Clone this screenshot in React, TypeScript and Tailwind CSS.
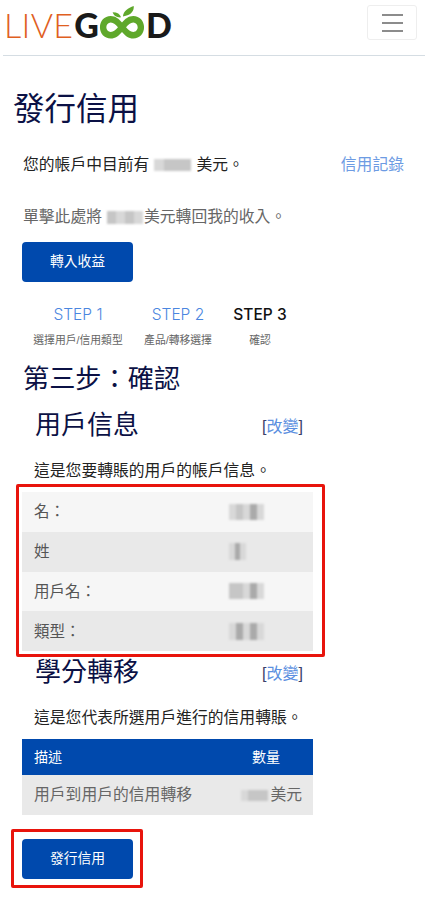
import { ReactNode } from 'react'

const font = { cjk: 'font-["Liberation_Sans","Noto_Sans_CJK_TC",sans-serif]' }

// pixelated-out amounts in the screenshot, one shade per block
function Redacted({ shades, className }: { shades: string[]; className: string }) {
  return (
    <span className={`flex blur-[1px] ${className}`}>
      {shades.map((shade, i) => (
        <span key={i} className={`flex-1 ${shade}`} />
      ))}
    </span>
  )
}

const light = 'bg-[#d8d8d8]'
const mid = 'bg-[#c6c6c6]'
const dark = 'bg-[#aaaaaa]'
const blank = 'bg-transparent'

function Logo() {
  return (
    <div className="flex items-start h-[55px] pl-[1px] pt-[4px] select-none">
      <span className="font-['Lato',sans-serif] font-light text-[#e0601f] text-[34px] leading-[42px] tracking-[0.3px]">LIVE</span>
      <span className="font-['Lato',sans-serif] font-black text-[#1a1a1a] text-[34px] leading-[42px] ml-[1px]">G</span>
      <svg width="46" height="36" viewBox="0 0 49 36" className="mt-[1px]">
        <path fillRule="evenodd" fill="#5fa82b" d="M12.500 10.500C5.500 10.500 1 16 1 22.500S5.500 34.500 12.500 34.500c5 0 8.700-3 12-7 3.300 4 7 7 12 7 7 0 11.500-5.500 11.500-12S43.500 10.500 36.500 10.500c-5 0-8.700 3-12 7-3.300-4-7-7-12-7Zm0 7c3 0 5.500 2.700 7.700 5-2.200 2.300-4.700 5-7.700 5-2.800 0-4.700-2.300-4.700-5s1.900-5 4.700-5Zm24 0c2.800 0 4.700 2.300 4.700 5s-1.900 5-4.700 5c-3 0-5.500-2.700-7.700-5 2.200-2.300 4.700-5 7.700-5Z" />
        <path fill="#5fa82b" d="M25.500 11C26 5.500 31 2 37 0c.5 5-2.500 10-11.500 11ZM23.500 12c-1-3.500-4-5.500-9-5.500 1 3.500 4.500 6 9 5.500Z" />
      </svg>
      <span className="font-['Lato',sans-serif] font-black text-[#1a1a1a] text-[34px] leading-[42px] ml-[1px]">D</span>
    </div>
  )
}

function Step({ title, sub, active, className }: { title: string; sub: string; active?: boolean; className: string }) {
  return (
    <div className={`flex flex-col items-center ${className}`}>
      <span className={`font-['Inter',sans-serif] text-[15.5px] leading-[20px] ${active ? 'text-[#111] font-medium' : 'text-[#4a86e0] font-light'}`}>{title}</span>
      <span className="text-[10.8px] leading-[14px] mt-[8px] text-[#666] whitespace-nowrap">{sub}</span>
    </div>
  )
}

function SectionHead({ title, className }: { title: string; className?: string }) {
  return (
    <div className={`flex justify-between items-end pl-[13px] w-[281px] ${className ?? ''}`}>
      <h3 className="text-[26px] leading-[36px] text-[#0b1145]">{title}</h3>
      <span className="text-[16px] leading-[24px] text-[#3a3f6b] mb-[4px]">
        [<span className="text-[#5b8fe0]">改變</span>]
      </span>
    </div>
  )
}

function InfoRow({ label, shade, value }: { label: string; shade: boolean; value: ReactNode }) {
  return (
    <div className={`flex items-center h-[39.75px] pl-[12px] text-[15.5px] text-[#555] ${shade ? 'bg-[#e9e9e9]' : 'bg-[#f6f6f6]'}`}>
      <span className="w-[195px]">{label}</span>
      {value}
    </div>
  )
}

function BlueButton({ children }: { children: ReactNode }) {
  return (
    <button className="w-[111px] h-[40px] rounded-[4px] bg-[#0049ad] text-white text-[13.8px]">
      {children}
    </button>
  )
}

export default function App() {
  return (
    <div className={`relative w-[425px] h-[898px] overflow-hidden bg-white ${font.cjk}`}>
      {/* Navbar */}
      <header className="flex justify-between ml-[3px] h-[56px] border-b border-[#d5dde3]">
        <Logo />
        <button className="mt-[5px] mr-[8px] w-[50px] h-[35px] rounded-[3px] border border-[#eeeeee] flex flex-col items-center justify-center gap-[6px]">
          <span className="block w-[21px] h-[2px] bg-[#8c8c8c]" />
          <span className="block w-[21px] h-[2px] bg-[#8c8c8c]" />
          <span className="block w-[21px] h-[2px] bg-[#8c8c8c]" />
        </button>
      </header>

      <main className="pl-[22px]">
        <h2 className="-ml-[9px] mt-[31px] text-[31.500px] leading-[44px] text-[#0b1145]">發行信用</h2>

        <div className="flex items-center justify-between mt-[22px] pr-[21px] h-[24px]">
          <p className="flex items-center text-[15.8px] text-[#222]">
            <span className="ml-px">您的帳戶中目前有</span>
            <Redacted shades={[light, mid, mid, mid]} className="w-[37px] h-[12px] mx-[5px]" />
            <span>美元。</span>
          </p>
          <span className="text-[15.8px] text-[#6d9be3]">信用記錄</span>
        </div>

        <p className="flex items-center mt-[28px] h-[24px] text-[15.8px] text-[#666]">
          <span className="ml-px">單擊此處將</span>
          <Redacted shades={[mid, light, mid, light]} className="w-[36px] h-[13px] ml-[5px] mr-[1px]" />
          <span>美元轉回我的收入。</span>
        </p>

        <div className="mt-[13px]">
          <BlueButton>轉入收益</BlueButton>
        </div>

        {/* Steps */}
        <div className="flex mt-[23px] h-[43px]">
          <Step title="STEP 1" sub="選擇用戶/信用類型" className="w-[112px]" />
          <Step title="STEP 2" sub="產品/轉移選擇" className="w-[88px]" />
          <Step title="STEP 3" sub="確認" active className="w-[78px] -ml-[1px]" />
        </div>

        <h3 className="mt-[13px] ml-px text-[26.200px] leading-[36px] text-[#0b1145]">第三步：確認</h3>

        <SectionHead title="用戶信息" className="mt-[10px]" />
        <p className="ml-[12px] mt-[16px] text-[15.8px] leading-[24px] text-[#222]">這是您要轉賬的用戶的帳戶信息。</p>

        <div className="mt-[9px] w-[291px]">
          <InfoRow label="名：" shade={false} value={<Redacted shades={[light, mid, light, dark, light]} className="w-[35px] h-[16px]" />} />
          <InfoRow label="姓" shade value={<Redacted shades={[light, dark, light]} className="w-[17px] h-[17px]" />} />
          <InfoRow label="用戶名：" shade={false} value={<Redacted shades={[mid, mid, light, dark, light]} className="w-[35px] h-[16px]" />} />
          <InfoRow label="類型：" shade value={<Redacted shades={[light, dark, light, dark, light]} className="w-[35px] h-[17px]" />} />
        </div>

        <SectionHead title="學分轉移" className="mt-[3px]" />
        <p className="ml-[12px] mt-[16px] text-[15.8px] leading-[24px] text-[#222]">這是您代表所選用戶進行的信用轉賬。</p>

        {/* Transfer table */}
        <div className="mt-[9px] w-[291px]">
          <div className="flex justify-between items-center h-[36px] pl-[12px] pr-[33px] bg-[#0049ad] text-white text-[14px]">
            <span>描述</span>
            <span>數量</span>
          </div>
          <div className="flex justify-between items-center h-[40px] pl-[12px] pr-[11px] bg-[#e9e9e9] text-[15.8px] text-[#666]">
            <span>用戶到用戶的信用轉移</span>
            <span className="flex items-center">
              <Redacted shades={[blank, light, mid, mid, mid]} className="w-[34px] h-[11px] mr-[2px]" />
              美元
            </span>
          </div>
        </div>

        <div className="mt-[24px]">
          <BlueButton>發行信用</BlueButton>
        </div>
      </main>

      {/* red annotation boxes drawn over the page */}
      <div className="absolute left-[16px] top-[484px] w-[309px] h-[173px] border-[3px] border-[#e8140c] rounded-[2px] pointer-events-none" />
      <div className="absolute left-[11px] top-[829px] w-[132px] h-[59px] border-[3px] border-[#e8140c] rounded-[2px] pointer-events-none" />
    </div>
  )
}
